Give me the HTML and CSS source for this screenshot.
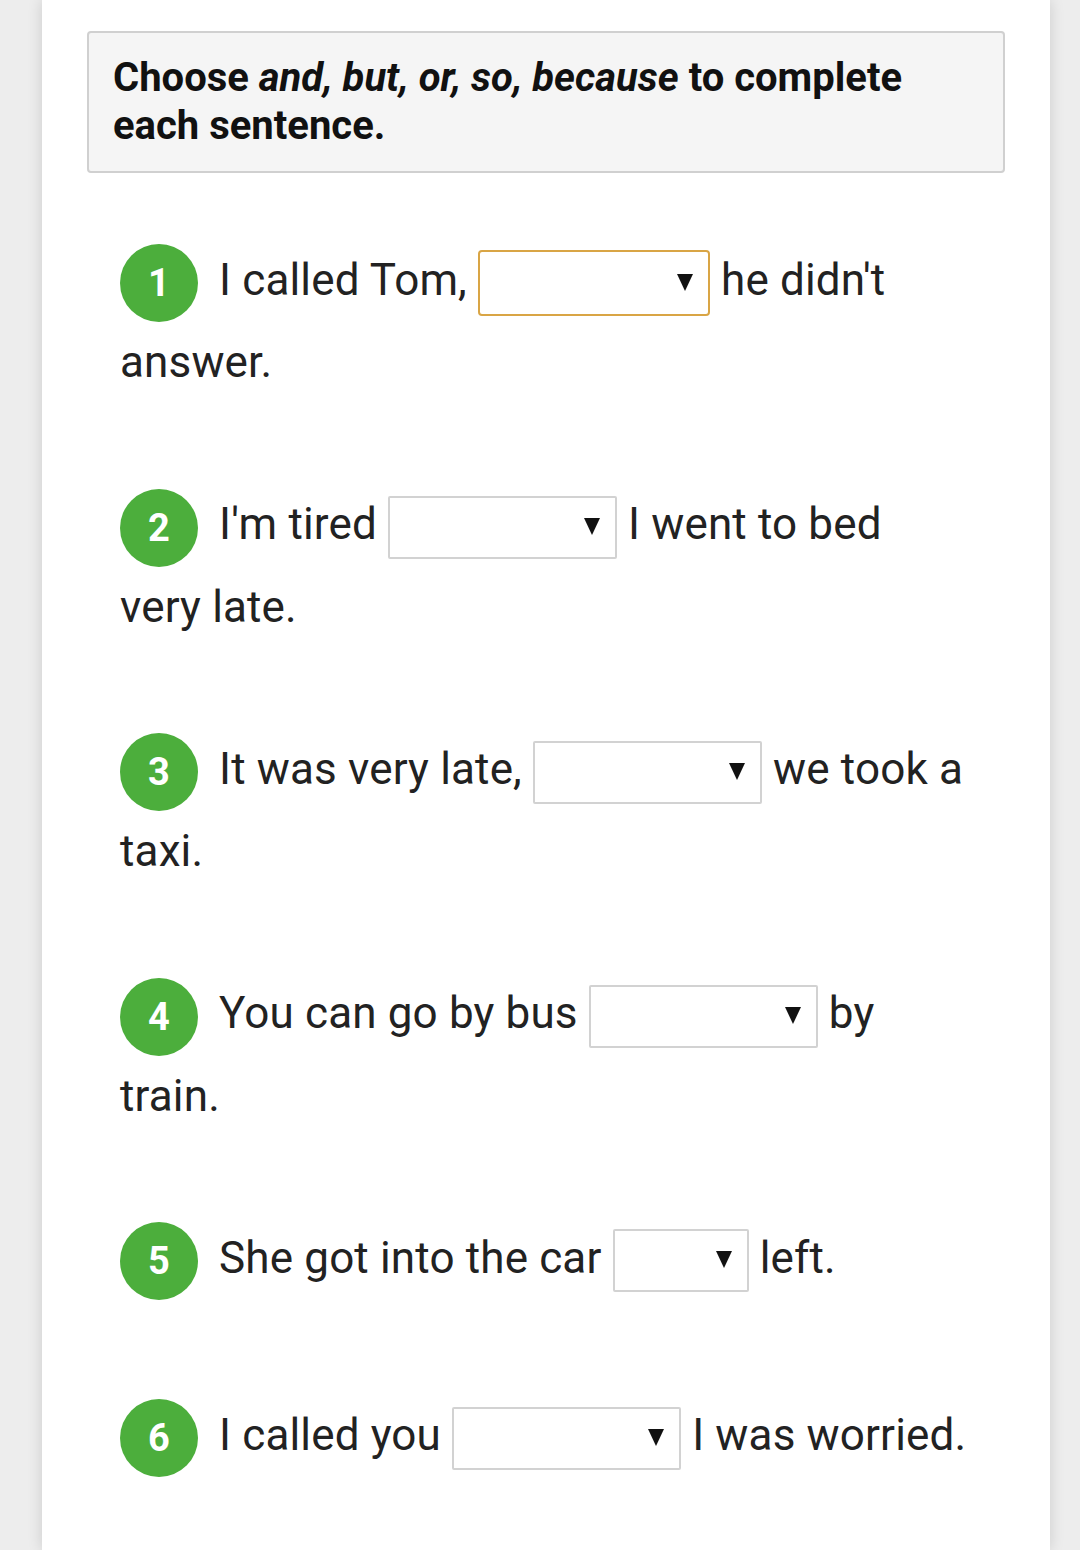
FILE: index.html
```html
<!DOCTYPE html>
<html>
<head>
<meta charset="utf-8">
<link rel="stylesheet" href="styles.css">
</head>
<body>
<div class="page">
  <div class="instructions">Choose <i>and, but, or, so, because</i> to complete each sentence.</div>
  <div class="items">
    <p class="item"><span class="num">1</span> I called Tom, <span class="select focus"><span class="arrow"></span></span> he didn't answer.</p>
    <p class="item"><span class="num">2</span> I'm tired <span class="select"><span class="arrow"></span></span> I went to bed very late.</p>
    <p class="item"><span class="num">3</span> It was very late, <span class="select"><span class="arrow"></span></span> we took a taxi.</p>
    <p class="item"><span class="num">4</span> You can go by bus <span class="select"><span class="arrow"></span></span> by train.</p>
    <p class="item single"><span class="num">5</span> She got into the car <span class="select short"><span class="arrow"></span></span> left.</p>
    <p class="item"><span class="num">6</span> I called you <span class="select"><span class="arrow"></span></span> I was worried.</p>
  </div>
</div>
</body>
</html>
```

FILE: styles.css
```css
html, body {
  margin: 0;
  padding: 0;
}
body {
  background: #ededed;
  font-family: Roboto, "Liberation Sans", sans-serif;
  color: #222;
}
.page {
  margin: 0 30px 0 42px;
  background: #fff;
  min-height: 1550px;
  box-shadow: 0 0 14px rgba(0, 0, 0, 0.14);
  padding: 31px 0 0;
  box-sizing: border-box;
}
.instructions {
  margin: 0 45px;
  background: #f5f5f5;
  border: 2px solid #d0d0d0;
  border-radius: 4px;
  padding: 21px 24px 21px;
  font-size: 40px;
  line-height: 48px;
  font-weight: 700;
  color: #111;
}
.items {
  padding: 67px 78px 0 78px;
}
.item {
  margin: 0 0 81px;
  font-size: 44px;
  letter-spacing: 0.15px;
  line-height: 81px;
}
.item.single {
  margin-bottom: 95px;
}
.num {
  display: inline-block;
  width: 78px;
  height: 78px;
  border-radius: 50%;
  background: #4cae3c;
  color: #fff;
  font-weight: 700;
  font-size: 38px;
  line-height: 78px;
  letter-spacing: 0;
  text-align: center;
  vertical-align: middle;
  margin-right: 10px;
}
.select {
  display: inline-flex;
  align-items: center;
  justify-content: flex-end;
  box-sizing: border-box;
  width: 229px;
  height: 63px;
  border: 2px solid #d2d2d2;
  border-radius: 2px;
  vertical-align: middle;
  padding-right: 15px;
  background: #fff;
}
.select.focus {
  width: 232px;
  height: 66px;
  border-color: #d9a545;
  border-radius: 4px;
}
.select.short {
  width: 136px;
}
.arrow {
  width: 0;
  height: 0;
  border-left: 8px solid transparent;
  border-right: 8px solid transparent;
  border-top: 17px solid #111;
  margin-top: -2px;
}
```
